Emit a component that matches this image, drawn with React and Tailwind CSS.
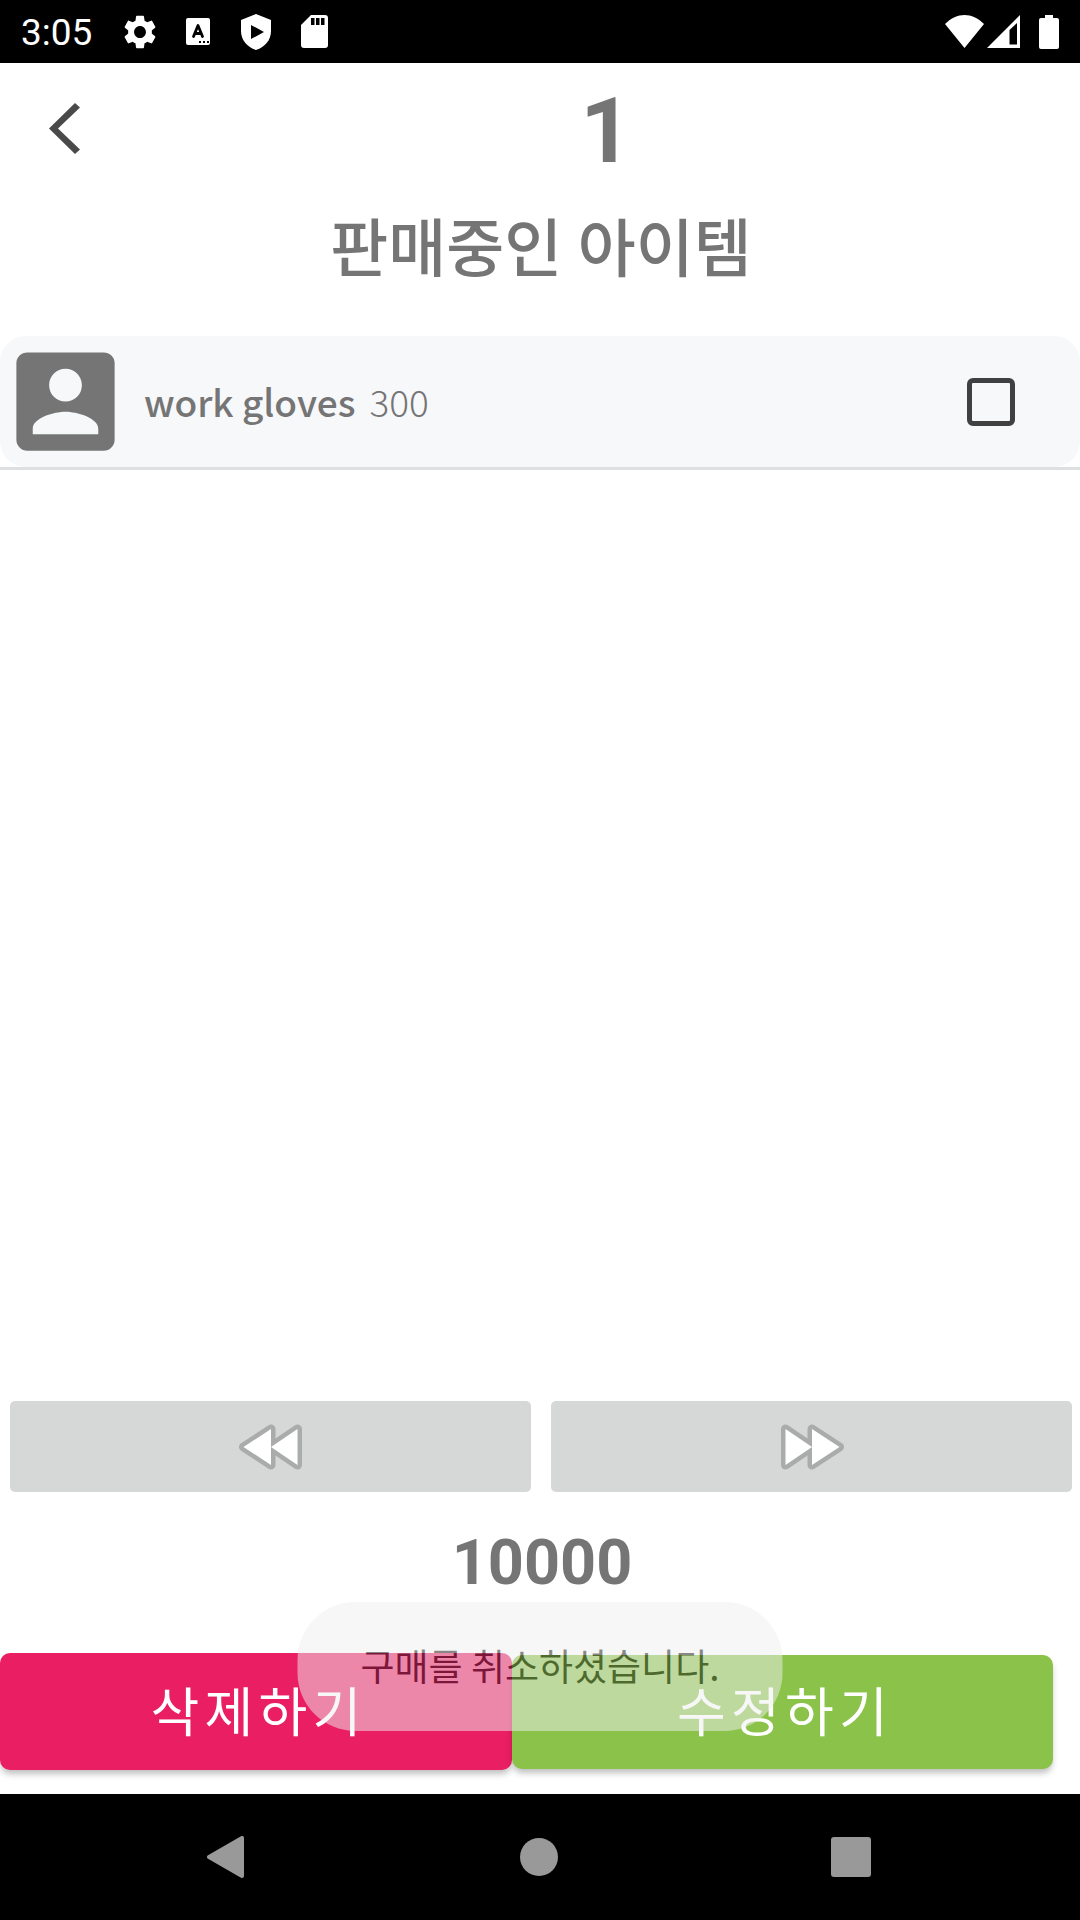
function StatusBar() {
  return (
    <div className="flex h-[63px] items-center bg-black pl-[21px] pr-[21px] text-white">
      <span className="pt-0.5 text-[37px] leading-none">3:05</span>
      <svg className="ml-8" width="32" height="34" viewBox="2.3 2 19.4 20" preserveAspectRatio="none" fill="currentColor" aria-hidden="true">
        <path d="M19.14 12.94c.04-.3.06-.61.06-.94 0-.32-.02-.64-.07-.94l2.03-1.58a.49.49 0 0 0 .12-.61l-1.92-3.32a.488.488 0 0 0-.59-.22l-2.39.96c-.5-.38-1.03-.7-1.62-.94l-.36-2.54a.484.484 0 0 0-.48-.41h-3.84c-.24 0-.43.17-.47.41l-.36 2.54c-.59.24-1.13.57-1.62.94l-2.39-.96c-.22-.08-.47 0-.59.22L2.74 8.87c-.12.21-.08.47.12.61l2.03 1.58c-.05.3-.09.63-.09.94s.02.64.07.94l-2.03 1.58a.49.49 0 0 0-.12.61l1.92 3.32c.12.22.37.29.59.22l2.39-.96c.5.38 1.03.7 1.62.94l.36 2.54c.05.24.24.41.48.41h3.84c.24 0 .44-.17.47-.41l.36-2.54c.59-.24 1.13-.56 1.62-.94l2.39.96c.22.08.47 0 .59-.22l1.92-3.32c.12-.22.07-.47-.12-.61l-2.01-1.58zM12 15.6c-1.98 0-3.6-1.62-3.6-3.6s1.62-3.6 3.6-3.6 3.6 1.62 3.6 3.6-1.62 3.6-3.6 3.6z" />
      </svg>
      <svg className="ml-[30px]" width="24" height="27" viewBox="0 0 24 27" aria-hidden="true">
        <rect width="24" height="27" rx="2" fill="#fff" />
        <path d="M7.5 18.5 12 7.5l4.5 11M9 15.5h6" fill="none" stroke="#000" strokeWidth="2.8" strokeLinejoin="round" strokeLinecap="round" />
        <path d="M13 23h2v2h-2zM17 23h2v2h-2zM21 23h2v2h-2z" />
      </svg>
      <svg className="ml-[31px]" width="30" height="36" viewBox="0 0 30 36" aria-hidden="true">
        <path d="M15 0 30 6v11c0 9-6 16-15 19C6 33 0 26 0 17V6z" fill="#fff" />
        <path d="M10 11v14l13-7z" />
      </svg>
      <svg className="ml-[30px]" width="27" height="33" viewBox="0 0 27 33" aria-hidden="true">
        <path d="M10 0h14a3 3 0 0 1 3 3v27a3 3 0 0 1-3 3H3a3 3 0 0 1-3-3V10z" fill="#fff" />
        <path d="M10 3h3.500v7H10zM15 3h3.500v7H15zM20 3h3.500v7H20z" />
      </svg>
      <svg className="ml-auto" width="39" height="33" viewBox="0 0 39 33" fill="currentColor" aria-hidden="true">
        <path d="M0 9C12-3 27-3 39 9L19.500 33z" />
      </svg>
      <svg className="ml-[3px]" width="33" height="33" viewBox="0 0 33 33" fill="currentColor" fillRule="evenodd" aria-hidden="true">
        <path d="M33 0v33H0zM30 8l-7.500 7v14.500H30z" />
      </svg>
      <svg className="ml-[19px]" width="20" height="34" viewBox="0 0 20 34" fill="currentColor" aria-hidden="true">
        <path d="M6 0h8v3h4a2 2 0 0 1 2 2v27a2 2 0 0 1-2 2H2a2 2 0 0 1-2-2V5a2 2 0 0 1 2-2h4z" />
      </svg>
    </div>
  );
}

function SkipIcon({ flipped = false }) {
  return (
    <svg className={flipped ? "-scale-x-100" : ""} width="64" height="46" viewBox="0 0 64 46" aria-hidden="true">
      <g stroke="#aaacab" strokeWidth="9" strokeLinejoin="round" fill="#aaacab">
        <path d="M32 5v36L4.500 23z" />
        <path d="M58.500 5v36L32 23z" />
      </g>
      <path d="M32 5v36L4.500 23zM58.500 5v36L32 23z" fill="#fff" />
    </svg>
  );
}

function ItemRow({ name, price }) {
  return (
    <li className="border-b-[3px] border-[#dddfe1]">
      <label className="flex h-[131px] items-center rounded-[26px] bg-[#f7f8fa] pr-[65px] text-[#757575]">
        <svg width="131" height="131" viewBox="0 0 24 24" fill="#757575" aria-hidden="true">
          <path d="M3 5v14a2 2 0 0 0 2 2h14a2 2 0 0 0 2-2V5a2 2 0 0 0-2-2H5a2 2 0 0 0-2 2zm12 4c0 1.660-1.340 3-3 3s-3-1.340-3-3 1.340-3 3-3 3 1.340 3 3zm-9 8c0-2 4-3.100 6-3.100s6 1.100 6 3.100v1H6v-1z" />
        </svg>
        <span className="ml-[13px] font-['Noto_Sans_CJK_KR',sans-serif] text-[37px] font-medium leading-none">{name}</span>
        <span className="ml-[14px] font-['Noto_Sans_CJK_KR',sans-serif] text-[37px] font-light leading-none">{price}</span>
        <input type="checkbox" className="ml-auto size-12 appearance-none rounded-[6px] border-[5px] border-[#404040] checked:bg-[#404040]" />
      </label>
    </li>
  );
}

export default function App() {
  return (
    <div className="flex min-h-screen flex-col bg-white font-[Roboto,'Noto_Sans_CJK_KR',sans-serif]">
      <StatusBar />
      <main className="flex flex-1 flex-col text-[#757575]">
        <header className="flex h-[134px] items-center">
          <button type="button" aria-label="Back" className="flex h-[130px] w-[128px] items-center justify-center self-start">
            <svg width="31" height="51" viewBox="0 0 31 51" fill="#4a4a4a" aria-hidden="true">
              <path d="M26 0 0 25.500 26 51l5-4.500L9 25.500 31 4.500z" />
            </svg>
          </button>
          <h1 className="flex-1 pl-1 pt-1 text-center text-[90px] font-bold leading-none">1</h1>
        </header>
        <h2 className="mt-1.5 pl-0.5 text-center font-[Roboto,'Noto_Sans_CJK_KR',sans-serif] text-[63px] font-medium leading-[94px]">판매중인 아이템</h2>
        <ul className="mt-[39px] flex-1">
          <ItemRow name="work gloves" price="300" />
        </ul>
        <div className="flex gap-5 pl-[10px] pr-2">
          <button type="button" aria-label="Previous" className="flex h-[91px] flex-1 items-center justify-center rounded-[5px] bg-[#d6d8d7]">
            <SkipIcon />
          </button>
          <button type="button" aria-label="Next" className="flex h-[91px] flex-1 items-center justify-center rounded-[5px] bg-[#d6d8d7]">
            <SkipIcon flipped />
          </button>
        </div>
        <p className="mt-8 pl-1 text-center text-[63px] font-bold leading-[78px]">10000</p>
        <div className="relative mt-[51px] flex items-center pb-6 pr-[27px] font-['Noto_Sans_CJK_KR',sans-serif] text-[53px] tracking-widest text-white">
          <button type="button" className="h-[117px] grow-[512] basis-0 rounded-[10px] bg-[#e91e63] pb-1 pl-[5px] leading-none tracking-widest shadow-[0_5px_6px_-1px_rgba(0,0,0,0.25)]">삭제하기</button>
          <button type="button" className="relative h-[114px] grow-[541] basis-0 rounded-[10px] bg-[#8bc34a] pb-1 pl-[5px] leading-none tracking-widest shadow-[0_5px_6px_-1px_rgba(0,0,0,0.25)]">수정하기</button>
          <div role="status" className="absolute bottom-[63px] left-1/2 flex h-[129px] -translate-x-1/2 items-center whitespace-nowrap rounded-[58px] bg-[#f0f0f0] px-[63px] pb-0.5 text-[37px] tracking-normal text-[#121212] opacity-50">
            구매를 취소하셨습니다.
          </div>
        </div>
      </main>
      <nav className="flex h-[126px] items-center justify-between bg-black pl-[207px] pr-[209px] text-[#999999]">
        <button type="button" aria-label="Back" className="w-10">
          <svg width="37" height="42" viewBox="0 0 37 42" fill="currentColor" stroke="currentColor" strokeWidth="4" strokeLinejoin="round" aria-hidden="true">
            <path d="M35 2v38L2 21z" />
          </svg>
        </button>
        <button type="button" aria-label="Home" className="size-[38px] rounded-full bg-[#999999]" />
        <button type="button" aria-label="Recent apps" className="size-10 rounded-[3px] bg-[#999999]" />
      </nav>
    </div>
  );
}
